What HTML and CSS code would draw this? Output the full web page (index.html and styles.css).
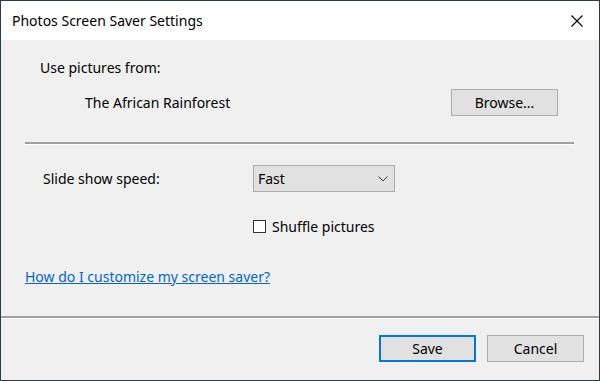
FILE: index.html
```html
<!DOCTYPE html>
<html>
<head>
<meta charset="utf-8">
<link rel="stylesheet" href="styles.css">
</head>
<body>
<div class="window">
  <div class="titlebar">
    <span class="title">Photos Screen Saver Settings</span>
    <svg class="close" width="12" height="12" viewBox="0 0 12 12"><path d="M0.5 0.5 L11.5 11.5 M11.5 0.5 L0.5 11.5" stroke="#000" stroke-width="1.1" fill="none"/></svg>
  </div>
  <div class="content">
    <div class="label-use">Use pictures from:</div>
    <div class="source-row">
      <span class="source-name">The African Rainforest</span>
      <button class="btn browse">Browse...</button>
    </div>
    <div class="sep"></div>
    <div class="speed-row">
      <span class="speed-label">Slide show speed:</span>
      <div class="select"><span>Fast</span>
        <svg width="10" height="6" viewBox="0 0 10 6"><path d="M0.5 0.5 L5 5 L9.5 0.5" stroke="#333" stroke-width="1" fill="none"/></svg>
      </div>
    </div>
    <div class="shuffle-row">
      <span class="checkbox"></span><span>Shuffle pictures</span>
    </div>
    <a class="link" href="#">How do I customize my screen saver?</a>
  </div>
  <div class="sep-full"></div>
  <div class="footer">
    <button class="btn primary">Save</button>
    <button class="btn">Cancel</button>
  </div>
</div>
</body>
</html>
```
FILE: styles.css
```css
* { box-sizing: border-box; }
html, body { margin: 0; padding: 0; }
body {
  width: 600px; height: 381px;
  font-family: "Noto Sans", "Open Sans", sans-serif;
  font-size: 14px;
  color: #000;
  background: #f0f0f0;
}
.window {
  width: 600px; height: 381px;
  border: 1px solid #2b3e4c;
  display: flex; flex-direction: column;
  background: #f0f0f0;
}
.titlebar {
  height: 39px; background: #fff;
  display: flex; align-items: center; justify-content: space-between;
  padding: 0 16px 0 11px;
}
.title { font-size: 14px; }
.content {
  flex: 1;
  padding: 18px 25px 0 24px;
  display: flex; flex-direction: column;
}
.label-use { padding-left: 15px; line-height: 20px; }
.source-row {
  display: flex; align-items: center; justify-content: space-between;
  margin-top: 11px; padding-left: 60px; padding-right: 16px;
}
.btn {
  font-family: inherit; font-size: 14px; color: #000;
  background: #e1e1e1; border: 1px solid #adadad;
  height: 27px; width: 97px; padding: 0;
}
.browse { width: 107px; }
.sep {
  margin-top: 26px;
  height: 3px;
  border-top: 2px solid #a0a0a0;
  border-bottom: 1px solid #fff;
}
.speed-row {
  display: flex; align-items: center; margin-top: 20px;
}
.speed-label { padding-left: 18px; width: 228px; }
.select {
  width: 142px; height: 27px;
  background: #e1e1e1; border: 1px solid #adadad;
  display: flex; align-items: center; justify-content: space-between;
  padding: 0 6px 0 4px;
}
.shuffle-row {
  display: flex; align-items: center; margin-top: 25px; padding-left: 228px;
  gap: 6px;
}
.checkbox {
  width: 13px; height: 13px; border: 1px solid #333; background: #fff;
}
.link {
  margin-top: 31px; color: #0066cc; align-self: flex-start;
  text-decoration: underline;
}
.sep-full {
  height: 3px;
  border-top: 2px solid #a0a0a0;
  border-bottom: 1px solid #fff;
  margin-bottom: 16px;
}
.footer {
  display: flex; justify-content: flex-end; gap: 11px;
  padding: 0 15px 18px 0;
}
.primary { border: 2px solid #0078d7; }
```
